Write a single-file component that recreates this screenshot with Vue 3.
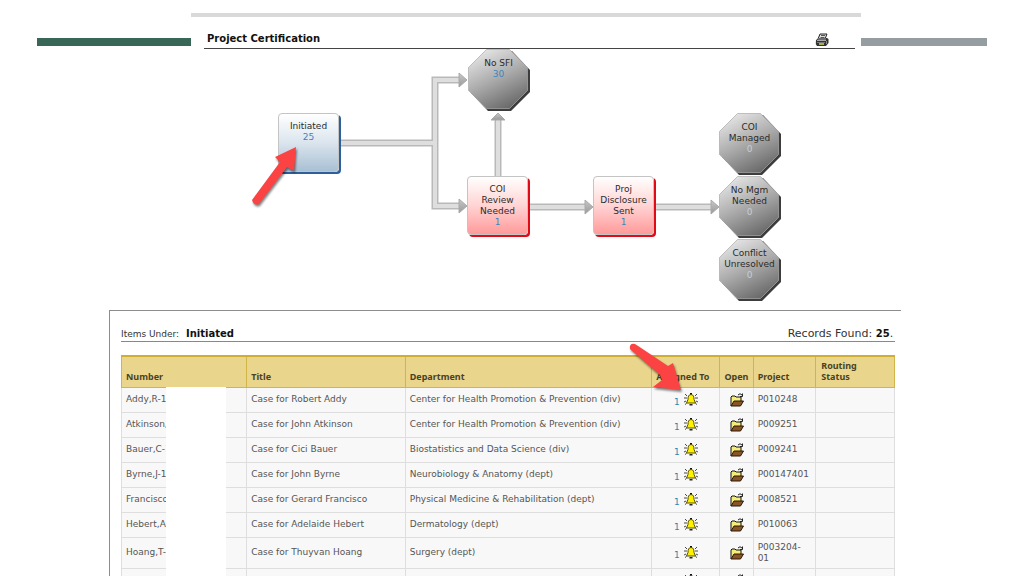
<script setup>
const octagons = [
  { id: 'sfi', lines: ['No SFI'], count: 30 },
  { id: 'managed', lines: ['COI', 'Managed'], count: 0 },
  { id: 'mgm', lines: ['No Mgm', 'Needed'], count: 0 },
  { id: 'conflict', lines: ['Conflict', 'Unresolved'], count: 0 },
]
const boxes = [
  { id: 'initiated', lines: ['Initiated'], count: 25 },
  { id: 'review', lines: ['COI', 'Review', 'Needed'], count: 1 },
  { id: 'disclosure', lines: ['Proj', 'Disclosure', 'Sent'], count: 1 },
]
const rows = [
  { number: 'Addy,R-10', title: 'Case for Robert Addy', dept: 'Center for Health Promotion & Prevention (div)', project: 'P010248' },
  { number: 'Atkinson,', title: 'Case for John Atkinson', dept: 'Center for Health Promotion & Prevention (div)', project: 'P009251' },
  { number: 'Bauer,C-1', title: 'Case for Cici Bauer', dept: 'Biostatistics and Data Science (div)', project: 'P009241' },
  { number: 'Byrne,J-1', title: 'Case for John Byrne', dept: 'Neurobiology & Anatomy (dept)', project: 'P00147401' },
  { number: 'Francisco', title: 'Case for Gerard Francisco', dept: 'Physical Medicine & Rehabilitation (dept)', project: 'P008521' },
  { number: 'Hebert,A-', title: 'Case for Adelaide Hebert', dept: 'Dermatology (dept)', project: 'P010063' },
  { number: 'Hoang,T-', title: 'Case for Thuyvan Hoang', dept: 'Surgery (dept)', project: 'P003204-01' },
  { number: '', title: '', dept: '', project: '' },
]
</script>

<template>
  <main class="page">
    <section class="top">
      <div class="bar green"></div>
      <div class="flow">
        <header class="flow-head">
          <h1>Project Certification</h1>
          <button class="icon-btn" type="button" aria-label="Print">
            <svg width="14" height="14" viewBox="0 0 14 14">
              <path d="M5 1h7l-2 5H3z" fill="#ddd" stroke="#222" />
              <path d="M6 2.500h4M5.500 4.500h4" stroke="#555" />
              <path d="M1 7l3-2h8l1.500 1v4L11 13H2L.8 11z" fill="#333" />
              <path d="M2 7.500h9M3 6h8" stroke="#aaa" />
              <path d="M2 9.500h8" stroke="#777" />
              <path d="M4 11h5" stroke="#d9d94a" stroke-width="1.500" />
              <path d="M11.500 8v3" stroke="#888" />
            </svg>
          </button>
        </header>
        <div class="canvas">
          <svg class="links" width="670" height="262" viewBox="0 0 670 262">
            <defs>
              <linearGradient id="tip" x1="0" y1="0" x2="0" y2="1">
                <stop offset="0" stop-color="#c8c8c8" />
                <stop offset="1" stop-color="#999" />
              </linearGradient>
            </defs>
            <g fill="none" stroke="#b9b9b9" stroke-width="7">
              <path d="M150 94H244M269 31H244V157H269M307 127V70M339 158H395M465 158H521" />
            </g>
            <g fill="none" stroke="#dedede" stroke-width="4">
              <path d="M150 94H244M270 31H244V157H270M307 127V69M339 158H396M465 158H522" />
            </g>
            <g fill="url(#tip)" stroke="#aaa" stroke-width="1">
              <path d="M268 24l8 7-8 7z" />
              <path d="M268 150l8 7-8 7z" />
              <path d="M300 71l7-7 7 7z" />
              <path d="M394 151l8 7-8 7z" />
              <path d="M520 151l8 7-8 7z" />
            </g>
          </svg>

          <div v-for="b in boxes" :key="b.id" class="node box" :class="b.id">
            <span v-for="l in b.lines" :key="l">{{ l }}</span>
            <a href="#">{{ b.count }}</a>
          </div>

          <div v-for="o in octagons" :key="o.id" class="node oct" :class="o.id">
            <svg class="shape" width="62" height="62" viewBox="0 0 62 62">
              <defs>
                <linearGradient :id="'g-' + o.id" x1="0.2" y1="0" x2="0.7" y2="1">
                  <stop offset="0" stop-color="#e8e8e8" />
                  <stop offset="0.500" stop-color="#ababab" />
                  <stop offset="1" stop-color="#686868" />
                </linearGradient>
              </defs>
              <path d="M20 2h24l18 19v22L43 62H20L3 44z" fill="#3d3d3d" />
              <path d="M18.500 .5h23L59.500 18.500v23L41.500 59.500h-23L.5 41.500v-23z" :fill="'url(#g-' + o.id + ')'" stroke="#aaa" stroke-opacity=".7" />
            </svg>
            <span v-for="l in o.lines" :key="l">{{ l }}</span>
            <a href="#" :class="{ zero: o.count === 0 }">{{ o.count }}</a>
          </div>

          <svg class="pointer-a" width="56" height="70" viewBox="0 0 56 70">
            <path d="M3 57L31 19 26 14 47 4 45 28 38 24 10 61Q5 63 3 57z" />
          </svg>
        </div>
      </div>
      <div class="bar gray"></div>
    </section>

    <section class="records">
      <div class="records-head">
        <p class="under">Items Under: <strong>Initiated</strong></p>
        <p class="found">Records Found: <strong>25</strong>.</p>
      </div>
      <div class="table-wrap">
        <table>
          <colgroup>
            <col class="c-number" /><col class="c-title" /><col class="c-dept" /><col class="c-assigned" />
            <col class="c-open" /><col class="c-project" /><col class="c-status" />
          </colgroup>
          <thead>
            <tr>
              <th>Number</th>
              <th>Title</th>
              <th>Department</th>
              <th class="assigned">
                Assigned To
                <svg class="pointer-b" width="62" height="56" viewBox="0 0 62 56">
                  <path d="M3 8Q2 2 8 3L41 25 46 22 54 49 26 46 35 39 33 34z" />
                </svg>
              </th>
              <th>Open</th>
              <th>Project</th>
              <th>Routing Status</th>
            </tr>
          </thead>
          <tbody>
            <tr v-for="(r, i) in rows" :key="i">
              <td class="num">{{ r.number }}</td>
              <td>{{ r.title }}</td>
              <td>{{ r.dept }}</td>
              <td>
                <div class="assign">
                  <a v-if="r.number" href="#">1</a>
                  <span v-else class="blank"></span>
                  <button class="icon-btn" type="button" aria-label="Notify">
                    <svg width="14" height="13" viewBox="0 0 14 13">
                      <path d="M6 0h2v2H6z" fill="#111" />
                      <path d="M7 1.500C4.500 1.500 4 4 4 6.500L2.500 10h9L10 6.500C10 4 9.500 1.500 7 1.500z" fill="#fff200" stroke="#554d00" />
                      <path d="M5.500 11h3v1.500h-3z" fill="#222" />
                      <path d="M1 1l2 2M13 1l-2 2M0 5h3M14 5h-3M0 9l2-1M14 9l-2-1M1 11.500l1.500-1M13 11.500l-1.500-1" stroke="#333" stroke-width=".9" />
                    </svg>
                  </button>
                </div>
              </td>
              <td>
                <div class="open">
                  <button class="icon-btn" type="button" aria-label="Open">
                    <svg width="14" height="14" viewBox="0 0 14 14">
                      <path d="M1 13V4l1-1h3l1 1h5v5" fill="#f7ee7a" stroke="#111" />
                      <path d="M1 13L4 8H13.500L10.500 13z" fill="#8a5526" stroke="#2a1806" />
                      <path d="M8 2Q10 -.5 12 2M12.500 .5V3.500H10" fill="none" stroke="#222" />
                    </svg>
                  </button>
                </div>
              </td>
              <td>{{ r.project }}</td>
              <td></td>
            </tr>
          </tbody>
        </table>
        <div class="mask"></div>
      </div>
    </section>
  </main>
</template>

<style>
body {
  overflow: hidden;
  background: #fff;
}
</style>

<style scoped>
.page {
  height: 100vh;
  overflow: hidden;
  font: 9px/11px "DejaVu Sans", Verdana, sans-serif;
  color: #555;
}
h1, p { margin: 0; }
a { text-decoration: none; color: #3a87bd; }
.icon-btn {
  display: block;
  padding: 0;
  border: 0;
  background: none;
  cursor: pointer;
}
.icon-btn svg { display: block; }

.top {
  display: grid;
  grid-template-columns: 154fr 670fr 126fr;
  padding: 13px 37px 0;
}
.bar { height: 8px; margin-top: 25px; }
.green { background: #386657; }
.gray { background: #949da0; }
.flow { border-top: 4px solid #d9d9d9; }
.flow-head {
  display: flex;
  align-items: flex-end;
  justify-content: space-between;
  height: 32px;
  margin: 0 6px 0 13px;
  padding: 0 26px 1px 3px;
  border-bottom: 1px solid #444;
  box-sizing: border-box;
}
h1 {
  font-size: 10px;
  line-height: 16px;
  font-weight: bold;
  color: #111;
}
.canvas { position: relative; height: 262px; }
.links, .shape { position: absolute; left: 0; top: 0; }
.node {
  position: absolute;
  display: flex;
  flex-direction: column;
  align-items: center;
  box-sizing: border-box;
  color: #2b2b2b;
}
.node span, .node a { position: relative; white-space: nowrap; }
.box {
  width: 61px;
  height: 59px;
  padding-top: 7px;
  border: 1px solid #c4c4c4;
  border-radius: 4px;
}
.initiated {
  left: 87px;
  top: 64px;
  background: linear-gradient(#fff, #dbe5ee 50%, #a9c0d4);
  box-shadow: 2px 2px 0 #2d5f9c;
}
.review, .disclosure {
  background: linear-gradient(#fff, #ffd4d4 50%, #ff9a9a);
  box-shadow: 2px 2px 0 #e00b16;
}
.review { left: 276px; top: 127px; }
.disclosure { left: 402px; top: 127px; }
.oct { width: 61px; height: 60px; padding-top: 9px; }
.sfi { left: 277px; top: 0; }
.managed { left: 528px; top: 64px; }
.mgm { left: 528px; top: 127px; }
.conflict { left: 528px; top: 190px; }
.oct .zero { color: #c9cdd2; }
.pointer-a, .pointer-b {
  position: absolute;
  fill: #fb4343;
  filter: drop-shadow(1px 2px 1px rgba(0, 0, 0, 0.5));
}
.pointer-a { left: 58px; top: 94px; }
.pointer-b { left: -25px; top: -16px; z-index: 2; }

.records {
  margin: -1px 12% 0 109px;
  padding: 16px 6px 0 11px;
  border-top: 1px solid #8c8c8c;
  border-left: 1px solid #8c8c8c;
}
.records-head {
  display: flex;
  justify-content: space-between;
  align-items: baseline;
  padding-right: 2px;
  line-height: 14px;
  border-bottom: 1px solid #888;
  color: #333;
}
.under strong { margin-left: 4px; font-size: 10px; color: #111; }
.found { font-size: 11px; }
.found strong { font-size: 10px; color: #111; }
.table-wrap { position: relative; margin-top: 13px; }
table {
  width: 100%;
  table-layout: fixed;
  border-collapse: collapse;
}
.c-number { width: 16.2%; }
.c-title { width: 20.5%; }
.c-dept { width: 31.9%; }
.c-assigned { width: 8.8%; }
.c-open { width: 4.3%; }
.c-project { width: 8.1%; }
.c-status { width: 10.2%; }
th {
  position: relative;
  height: 31px;
  padding: 0 4px 5px;
  box-sizing: border-box;
  vertical-align: bottom;
  text-align: left;
  white-space: nowrap;
  font: bold 9px/11px "Noto Sans", Tahoma, sans-serif;
  color: #4a4228;
  background: #e9d58b;
  border: 1px solid #d2b548;
  border-top: 2px solid #cfae36;
}
th:last-child { white-space: normal; padding-right: 24px; padding-left: 5px; }
td {
  height: 25px;
  padding: 0 4px;
  box-sizing: border-box;
  background: #f8f8f8;
  border: 1px solid #dedede;
}
tbody tr:nth-child(7) td { height: 31px; }
.num { white-space: nowrap; }
.assign {
  display: flex;
  justify-content: center;
  align-items: flex-end;
  gap: 4px;
  padding-bottom: 1px;
}
.assign a { line-height: 7px; color: #2a86b4; }
.blank { width: 6px; }
.open { display: flex; justify-content: center; }
.mask {
  position: absolute;
  left: 45px;
  top: 32px;
  bottom: 0;
  width: 60px;
  background: #fff;
}
</style>
